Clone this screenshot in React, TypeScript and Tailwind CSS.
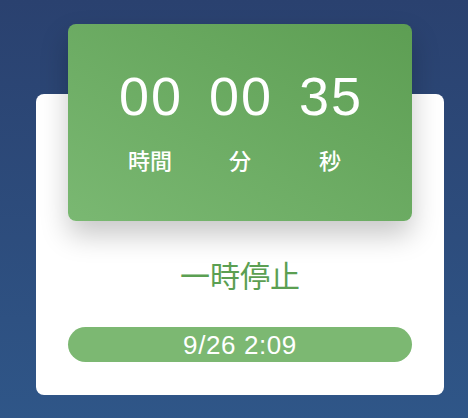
export default function App() {
  const units = [
    { value: '00', label: '時間' },
    { value: '00', label: '分' },
    { value: '35', label: '秒' },
  ];

  return (
    <div
      className="min-h-[418px] w-full bg-linear-to-b from-[#2a416f] to-[#2f5688] pt-[94px]"
      style={{ fontFamily: '"Liberation Sans", "Noto Sans CJK JP", sans-serif' }}
    >
      <div className="ml-[36px] flex w-[408px] flex-col rounded-lg bg-white px-8 pb-[33px]">
        {/* timer card, overlaps the top of the white card */}
        <div className="-mt-[70px] h-[197px] rounded-lg bg-linear-to-tr from-[#7ab872] to-[#5d9e53] pt-[45px] shadow-[0_14px_28px_rgba(0,0,0,0.22)]">
          <div className="flex justify-center">
            {units.map((u, i) => (
              <div key={i} className="flex w-[90px] flex-col items-center text-white">
                <span className="pl-[2px] text-[54px] leading-none tracking-[2px]">{u.value}</span>
                <span className="mt-[28px] text-[22px] font-medium leading-none">{u.label}</span>
              </div>
            ))}
          </div>
        </div>

        <p className="mt-[41px] text-center text-[30px] leading-none text-[#5b9f52]">一時停止</p>

        <div className="mt-[35px] flex h-[35px] items-center justify-center rounded-full bg-[#7cb872] text-[26px] leading-none tracking-[0.6px] text-white">
          9/26 2:09
        </div>
      </div>
    </div>
  );
}
